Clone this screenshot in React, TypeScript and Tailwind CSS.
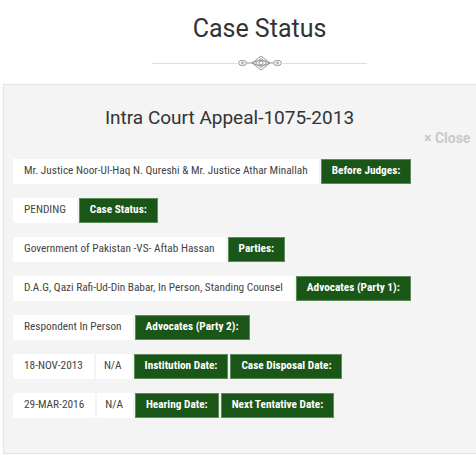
import React from "react";

const cond = { fontFamily: '"Roboto Condensed", "Liberation Sans Narrow", "Arial Narrow", Roboto, sans-serif' };

type Cell = { text: string; head?: boolean; narrow?: boolean };

const rows: Cell[][] = [
  [{ text: "Mr. Justice Noor-Ul-Haq N. Qureshi & Mr. Justice Athar Minallah" }, { text: "Before Judges:", head: true }],
  [{ text: "PENDING" }, { text: "Case Status:", head: true }],
  [{ text: "Government of Pakistan -VS- Aftab Hassan" }, { text: "Parties:", head: true }],
  [{ text: "D.A.G, Qazi Rafi-Ud-Din Babar, In Person, Standing Counsel" }, { text: "Advocates (Party 1):", head: true }],
  [{ text: "Respondent In Person" }, { text: "Advocates (Party 2):", head: true }],
  [{ text: "18-NOV-2013" }, { text: "N/A", narrow: true }, { text: "Institution Date:", head: true }, { text: "Case Disposal Date:", head: true }],
  [{ text: "29-MAR-2016" }, { text: "N/A", narrow: true }, { text: "Hearing Date:", head: true }, { text: "Next Tentative Date:", head: true }],
];

const Ornament = () => (
  <svg width="44" height="16" viewBox="0 0 44 16" fill="none" stroke="#8a8a8a" strokeWidth="0.9">
    <ellipse cx="4.5" cy="8" rx="4" ry="2.6" />
    <circle cx="4.5" cy="8" r="1" />
    <line x1="8.5" y1="8" x2="14" y2="8" />
    <polygon points="14,8 23,1 32,8 23,15" />
    <polygon points="17.5,8 23,3.5 28.5,8 23,12.5" />
    <circle cx="23" cy="8" r="2" />
    <path d="M14 8 Q23 3 32 8 M14 8 Q23 13 32 8" />
    <line x1="32" y1="8" x2="35.5" y2="8" />
    <ellipse cx="39.5" cy="8" rx="4" ry="2.6" />
    <circle cx="39.5" cy="8" r="1" />
  </svg>
);

export default function App() {
  return (
    <div className="w-full h-[463px] overflow-hidden bg-white" style={{ fontFamily: "Roboto, sans-serif" }}>
      {/* page header */}
      <div className="w-[519px] flex flex-col items-center">
        <h1 className="mt-[14px] text-[25px] leading-[30px] text-[#333]">Case Status</h1>
        <div className="mt-[11px] relative w-[215px] h-[16px] flex items-center justify-center">
          <div className="absolute left-0 right-0 top-[8px] h-px bg-[#dedede]" />
          <div className="relative bg-white px-[1px]">
            <Ornament />
          </div>
        </div>
      </div>

      {/* case panel */}
      <div className="mt-[13px] ml-[3px] w-[560px] h-[370px] bg-[#f4f4f4] border border-[#e6e6e6] shadow-[0_0_2px_rgba(0,0,0,0.05)] pt-[22px] pl-[9px]">
        <div className="w-[433px] text-center text-[19px] leading-[22px] text-[#333]">Intra Court Appeal-1075-2013</div>
        <div className="mt-[1px] ml-[411px] text-[14px] leading-[16px] font-bold text-[#c9c9c9]">× Close</div>

        <div className="mt-[13px] flex flex-col gap-[14px]" style={cond}>
          {rows.map((row, i) => (
            <div key={i} className="flex gap-[2px] h-[25px]">
              {row.map((c, j) =>
                c.head ? (
                  <div key={j} className="h-full flex items-center px-[10px] bg-[#1a5617] border border-[#5e8c59] text-white font-bold text-[11.3px]">
                    {c.text}
                  </div>
                ) : (
                  <div key={j} className={`h-full flex items-center bg-white text-[#444] text-[11.3px] ${c.narrow ? "pl-[8px] pr-[10px]" : "px-[11px]"}`}>
                    {c.text}
                  </div>
                )
              )}
            </div>
          ))}
        </div>
      </div>
    </div>
  );
}
